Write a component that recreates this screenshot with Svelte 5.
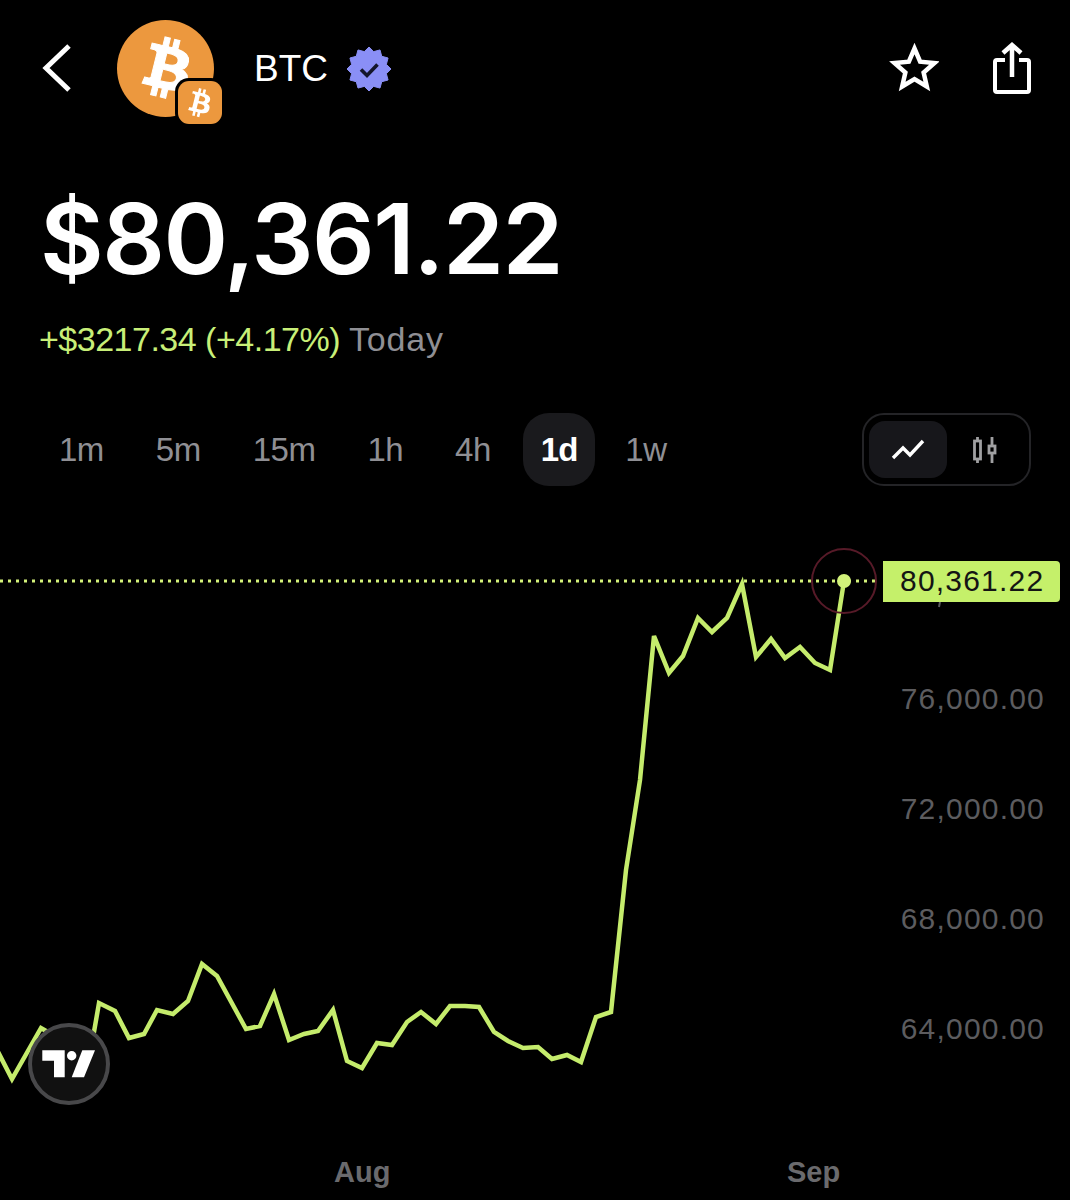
<script>
	const frames = ['1m', '5m', '15m', '1h', '4h', '1d', '1w'];
	const axis = ['76,000.00', '72,000.00', '68,000.00', '64,000.00'];
	const btc =
		'M17.288 10.291c.24-1.59-.974-2.45-2.64-3.03l.54-2.153-1.315-.33-.525 2.107c-.345-.087-.705-.167-1.064-.25l.526-2.127-1.32-.33-.54 2.165c-.285-.067-.565-.132-.84-.2l-1.815-.45-.35 1.407s.975.225.955.236c.535.136.63.486.615.766l-1.477 5.92c-.075.166-.24.406-.614.314.015.02-.96-.24-.96-.24l-.66 1.51 1.71.426.93.242-.54 2.19 1.32.327.54-2.17c.36.1.705.19 1.05.273l-.51 2.154 1.32.33.545-2.19c2.24.427 3.93.257 4.64-1.774.57-1.637-.03-2.58-1.217-3.196.854-.193 1.5-.76 1.68-1.93h.01zM14.278 14.511c-.404 1.64-3.157.75-4.05.53l.72-2.9c.896.23 3.757.67 3.33 2.37zM14.688 10.271c-.37 1.49-2.662.735-3.405.55l.654-2.64c.744.18 3.137.524 2.75 2.084v.006z';

	// price line, in page coordinates
	const line = [
		[-4, 1048], [12, 1079], [41, 1028], [62, 1040], [94, 1032], [99, 1003], [115, 1011], [129, 1038], [144, 1034],
		[157, 1010], [173, 1014], [188, 1001], [202, 964], [217, 976], [246, 1029], [260, 1026], [274, 994], [289, 1040],
		[304, 1034], [318, 1031], [333, 1010], [347, 1061], [362, 1068], [377, 1043], [392, 1045], [407, 1022],
		[421, 1012], [436, 1024], [450, 1006], [465, 1006], [479, 1007], [494, 1032], [508, 1041], [523, 1048],
		[538, 1047], [552, 1059], [567, 1055], [581, 1062], [596, 1017], [611, 1012], [626, 870], [640, 780], [654, 636],
		[669, 673], [683, 656], [698, 618], [712, 632], [727, 618], [742, 584], [756, 657], [771, 639], [785, 658],
		[800, 647], [815, 663], [830, 670], [844, 581]
	].map((p) => p.join(',')).join(' ');

	function burst(n, outer, inner, cx, cy) {
		return Array.from({ length: n * 2 }, (_, i) => {
			const r = i % 2 ? inner : outer;
			const a = (i * Math.PI) / n - Math.PI / 2;
			return `${(cx + r * Math.cos(a)).toFixed(2)},${(cy + r * Math.sin(a)).toFixed(2)}`;
		}).join(' ');
	}

	const seal = burst(12, 22, 18, 23, 23);
	const star = burst(5, 21, 9.6, 25.5, 27.5);
</script>

<div class="page">
	<header>
		<svg class="back" width="34" height="50" viewBox="0 0 34 50">
			<path d="M29 3 6 25l23 22" fill="none" stroke="#fff" stroke-width="5" />
		</svg>
		<div class="avatar">
			<svg width="97" height="97" viewBox="0 0 24 24">
				<circle cx="12" cy="12" r="12" fill="#ec983e" />
				<path d={btc} transform="translate(.4 0)" fill="#fff" stroke="#fff" stroke-width=".25" fill-rule="evenodd" />
			</svg>
			<div class="chain">
				<svg width="46" height="46" viewBox="0 0 24 24"><path d={btc} fill="#fff" fill-rule="evenodd" /></svg>
			</div>
		</div>
		<span class="symbol">BTC</span>
		<svg class="verified" width="46" height="46" viewBox="0 0 46 46">
			<polygon points={seal} fill="#8a8ff6" stroke="#8a8ff6" stroke-linejoin="round" />
			<path d="M15 23.500l6 6 10.500-11" fill="none" stroke="#14162c" stroke-width="3.600" />
		</svg>
		<div class="actions">
			<svg width="50" height="52" viewBox="0 0 50 52">
				<polygon points={star} fill="none" stroke="#fff" stroke-width="4.500" stroke-linejoin="miter" />
			</svg>
			<svg width="44" height="54" viewBox="0 0 44 54">
				<path d="M17 18H9a2 2 0 0 0-2 2v28a2 2 0 0 0 2 2h30a2 2 0 0 0 2-2V20a2 2 0 0 0-2-2h-8" fill="none" stroke="#fff" stroke-width="4" />
				<path d="M24 35V3M15 11l9-8 9 8" fill="none" stroke="#fff" stroke-width="4.500" />
			</svg>
		</div>
	</header>

	<h1>$80,361.22</h1>
	<p class="change"><span class="up">+$3217.34 (+4.17%)</span> <span class="today">Today</span></p>

	<div class="controls">
		<div class="frames">
			{#each frames as f}
				<button class:active={f === '1d'}>{f}</button>
			{/each}
		</div>
		<div class="toggle">
			<button class="active" aria-label="Line chart">
				<svg width="34" height="24" viewBox="0 0 34 24">
					<path d="M2 20l10-10 7 7L32 3" fill="none" stroke="#fff" stroke-width="3.400" />
				</svg>
			</button>
			<button aria-label="Candles">
				<svg width="26" height="30" viewBox="0 0 26 30" fill="none" stroke="#a0a0a2" stroke-width="2.800">
					<rect x="2.500" y="6" width="6" height="18" />
					<path d="M5.500 2v4M5.500 24v4" />
					<rect x="17" y="11" width="6" height="7" />
					<path d="M20 2v9M20 18v10" />
				</svg>
			</button>
		</div>
	</div>

	<div class="chart">
		<svg class="plot" width="1070" height="700" viewBox="0 500 1070 700">
			<line x1="0" y1="581" x2="880" y2="581" stroke="#d4f27a" stroke-width="3" stroke-dasharray="3 5" />
			<polyline points={line} fill="none" stroke="#c5ec6c" stroke-width="4.500" stroke-linejoin="miter" />
			<circle cx="844" cy="581" r="32" fill="none" stroke="#571a28" stroke-width="2" />
			<circle cx="844" cy="581" r="7" fill="#d2f27a" />
			<line x1="940" y1="602" x2="939" y2="607" stroke="#5c5c5f" stroke-width="2" />
		</svg>
		<div class="axis">
			{#each axis as a}
				<span>{a}</span>
			{/each}
		</div>
		<div class="tag">80,361.22</div>
		<div class="months"><span>Aug</span><span>Sep</span></div>
		<div class="tv">
			<svg width="54" height="28" viewBox="0 0 54 28" fill="#fff">
				<polygon points="0.300,0.300 22.700,0.300 22.700,27.300 12,27.300 12,10.700 0.300,10.700" />
				<circle cx="29.700" cy="5.700" r="4.700" />
				<polygon points="40.300,0.300 53,0.300 42,27.300 29.700,27.300" />
			</svg>
		</div>
	</div>
</div>

<style>
	:global(body) {
		background: #000;
	}

	.page {
		width: 1070px;
		height: 1200px;
		overflow: hidden;
		background: #000;
		color: #fff;
		font-family: 'Liberation Sans', Arial, sans-serif;
	}

	header {
		display: flex;
		align-items: flex-start;
		height: 105px;
		padding: 20px 38px 0 40px;
	}

	.back {
		margin-top: 23px;
	}

	.avatar {
		position: relative;
		width: 97px;
		height: 97px;
		margin-left: 43px;
	}

	.chain {
		position: absolute;
		left: 61px;
		top: 61px;
		width: 44px;
		height: 43px;
		display: flex;
		align-items: center;
		justify-content: center;
		background: #ec983e;
		border-radius: 11px;
		box-shadow: 0 0 0 3px #000;
	}

	.chain svg {
		flex-shrink: 0;
	}

	.symbol {
		margin-left: 40px;
		margin-top: 27px;
		font-size: 37px;
		line-height: 43px;
	}

	.verified {
		margin: 26px 0 0 18px;
	}

	.actions {
		margin-left: auto;
		display: flex;
		align-items: flex-start;
		gap: 49px;
		padding-top: 22px;
	}

	h1 {
		margin: 56px 0 0 40px;
		font-family: Inter, 'Liberation Sans', sans-serif;
		font-size: 98px;
		font-weight: 600;
		line-height: 116px;
		letter-spacing: -1.500px;
	}

	.change {
		margin: 23px 0 0 39px;
		font-size: 34px;
		line-height: 38px;
		letter-spacing: -0.5px;
	}

	.up {
		color: #c8ef78;
	}

	.today {
		color: #8f8f94;
		letter-spacing: 0.8px;
	}

	.controls {
		display: flex;
		justify-content: space-between;
		align-items: center;
		margin-top: 55px;
		padding: 0 39px;
	}

	.frames {
		display: flex;
		gap: 12px;
	}

	button {
		border: none;
		background: none;
		font: inherit;
		padding: 0;
		margin: 0;
	}

	.frames button {
		height: 73px;
		padding: 0 20px;
		font-size: 33px;
		letter-spacing: -0.5px;
		color: #8f8f94;
		border-radius: 26px;
	}

	.frames button.active {
		padding: 0 18px;
		margin-right: -2px;
		letter-spacing: -1px;
		background: #1a1a1d;
		color: #fff;
		font-weight: 700;
	}

	.toggle {
		display: flex;
		width: 169px;
		height: 73px;
		padding: 6px 5px;
		box-sizing: border-box;
		border: 2px solid #242427;
		border-radius: 22px;
	}

	.toggle button {
		width: 78px;
		display: flex;
		align-items: center;
		justify-content: center;
		border-radius: 16px;
	}

	.toggle button.active {
		background: #17171b;
	}

	.chart {
		position: relative;
		height: 700px;
		margin-top: 14px;
	}

	.plot {
		position: absolute;
		left: 0;
		top: 0;
	}

	.axis {
		position: absolute;
		right: 25px;
		top: 181px;
		display: flex;
		flex-direction: column;
		gap: 74px;
		font-size: 30px;
		line-height: 36px;
		letter-spacing: 1.200px;
		color: #5c5c5f;
	}

	.tag {
		position: absolute;
		left: 883px;
		top: 61px;
		width: 177px;
		height: 41px;
		box-sizing: border-box;
		padding-left: 17px;
		background: #c5f06a;
		border-radius: 0 4px 4px 0;
		color: #141414;
		font-size: 30px;
		line-height: 39px;
		letter-spacing: 1.200px;
	}

	.months {
		position: absolute;
		left: 0;
		top: 655px;
		width: 100%;
	}

	.months span {
		position: absolute;
		font-size: 29px;
		font-weight: 700;
		line-height: 34px;
		color: #6a6a6d;
	}

	.months span:first-child {
		left: 334px;
	}

	.months span:last-child {
		left: 787px;
	}

	.tv {
		position: absolute;
		left: 28px;
		top: 523px;
		width: 82px;
		height: 82px;
		box-sizing: border-box;
		display: flex;
		align-items: center;
		justify-content: center;
		background: #111;
		border: 4px solid #48484a;
		border-radius: 50%;
	}
</style>
